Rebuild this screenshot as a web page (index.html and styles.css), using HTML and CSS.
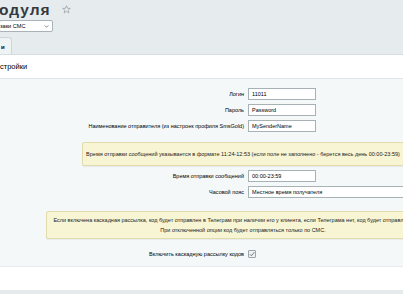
FILE: index.html
```html
<!DOCTYPE html>
<html lang="ru">
<head>
<meta charset="utf-8">
<title>Настройки модуля</title>
<link rel="stylesheet" href="styles.css">
</head>
<body>
<div class="page">
  <div class="header">
    <div class="title-row">
      <h1 class="title">одуля</h1>
      <svg class="star" viewBox="0 0 10 10" width="9" height="9"><path d="M5 0.8 L6.2 3.6 L9.2 3.8 L6.9 5.8 L7.6 8.8 L5 7.2 L2.4 8.8 L3.1 5.8 L0.8 3.8 L3.8 3.6 Z" fill="none" stroke="#9aa3a7" stroke-width="0.9" stroke-linejoin="round"/></svg>
    </div>
    <div class="sel-row">
      <div class="select">
        <span>заки СМС</span>
        <svg class="arrow" viewBox="0 0 6 4" width="5" height="3"><path d="M0.6 0.6 L3 3 L5.4 0.6" fill="none" stroke="#555" stroke-width="0.9"/></svg>
      </div>
    </div>
    <div class="tabs">
      <div class="tab">и</div>
    </div>
  </div>
  <div class="panel">
    <div class="heading">стройки</div>
    <div class="form">
      <div class="row">
        <label class="label">Логин</label>
        <div class="field"><div class="input">11011</div></div>
      </div>
      <div class="row">
        <label class="label">Пароль</label>
        <div class="field"><div class="input">Password</div></div>
      </div>
      <div class="row">
        <label class="label">Наименование отправителя (из настроек профиля SmsGold)</label>
        <div class="field"><div class="input">MySenderName</div></div>
      </div>
      <div class="note note-time">Время отправки сообщений указывается в формате 11:24-12:53 (если поле не заполнено - берется весь день 00:00-23:59)</div>
      <div class="row">
        <label class="label">Время отправки сообщений</label>
        <div class="field"><div class="input">00:00-23:59</div></div>
      </div>
      <div class="row">
        <label class="label">Часовой пояс</label>
        <div class="field"><div class="input wide">Местное время получателя</div></div>
      </div>
      <div class="note note-cascade">Если включена каскадная рассылка, код будет отправлен в Телеграм при наличии его у клиента, если Телеграма нет, код будет отправлен по СМС.<br>При отключенной опции код будет отправляться только по СМС.</div>
      <div class="row row-check">
        <label class="label">Включить каскадную рассылку кодов</label>
        <div class="field"><span class="checkbox"><svg viewBox="0 0 8 8" width="8" height="8"><path d="M1.8 4.2 L3.4 5.8 L6.4 2.2" fill="none" stroke="#6a7478" stroke-width="0.9"/></svg></span></div>
      </div>
    </div>
    <div class="footer"></div>
  </div>
  <div class="bottom"></div>
</div>
</body>
</html>
```
FILE: styles.css
```css
html, body {
  margin: 0;
  padding: 0;
  overflow: hidden;
  background: #e6ecee;
}
body {
  font-family: "Liberation Sans", Arial, sans-serif;
  color: #000;
}
.page {
  width: 486px;
}
.header {
  background: #e6ecee;
  padding-top: 3px;
}
.title-row {
  display: flex;
  align-items: center;
  height: 14px;
}
.title {
  margin: 0;
  font-size: 15.5px;
  font-weight: bold;
  color: #33393c;
  line-height: 14px;
  letter-spacing: 1px;
  margin-left: -1px;
}
.star {
  margin-left: 11px;
  margin-top: -1px;
}
.sel-row {
  margin-top: 3px;
  height: 12px;
}
.select {
  width: 49px;
  height: 10px;
  margin-left: -1px;
  border: 1px solid #a9b3b7;
  border-radius: 2px;
  background: #fff;
  display: flex;
  align-items: center;
  justify-content: space-between;
  font-size: 5.6px;
  padding: 0 3px 0 0;
  box-sizing: content-box;
}
.tabs {
  margin-top: 5px;
  display: flex;
}
.tab {
  width: 12px;
  height: 17px;
  background: #eef3f4;
  border: 1px solid #cdd6d9;
  border-left: none;
  border-bottom: none;
  border-radius: 0 3px 0 0;
  font-size: 6px;
  font-weight: bold;
  line-height: 18px;
  padding-left: 1px;
  box-sizing: border-box;
}
.panel {
  background: #fff;
  border-top: 1px solid #d6dee0;
}
.heading {
  font-size: 7.5px;
  line-height: 10px;
  padding: 7px 0 6px 0;
  border-bottom: 1px solid #dfe6e8;
  color: #000;
}
.form {
  background: #f5f8f9;
  padding: 9px 0 6px 0;
  display: flex;
  flex-direction: column;
  border-bottom: 1px solid #e6ebec;
}
.row {
  display: grid;
  grid-template-columns: 244px 1fr;
  column-gap: 4px;
  align-items: center;
  height: 12px;
  margin-bottom: 4px;
}
.label {
  text-align: right;
  font-size: 5.5px;
  color: #000;
  white-space: nowrap;
}
.input {
  width: 68px;
  height: 12px;
  box-sizing: border-box;
  border: 1px solid #a7b2b6;
  background: #fff;
  font-size: 5.5px;
  line-height: 10px;
  padding-left: 3px;
  white-space: nowrap;
  overflow: hidden;
}
.input.wide {
  width: 170px;
}
.note {
  background: #f8f5d4;
  border: 1px solid #e2dbab;
  border-radius: 2px;
  box-shadow: 0 1px 1px rgba(0,0,0,0.06);
  font-size: 5.5px;
  color: #222;
  text-align: center;
  white-space: nowrap;
}
.note-time {
  margin: 6px 0 4px 82px;
  width: 322px;
  height: 24px;
  line-height: 22px;
  box-sizing: border-box;
}
.note-cascade {
  margin: 9px 0 9px 46px;
  width: 394px;
  height: 28px;
  box-sizing: border-box;
  line-height: 10px;
  padding-top: 3px;
}
.row-check {
  margin-bottom: 0;
}
.checkbox {
  display: block;
  width: 8px;
  height: 8px;
  box-sizing: border-box;
  border: 1px solid #9aa5aa;
  background: #eef2f3;
  border-radius: 1px;
  position: relative;
}
.checkbox svg {
  position: absolute;
  left: -1px;
  top: -1px;
}
.footer {
  height: 23px;
  background: #fff;
}
.bottom {
  height: 10px;
  background: #e6ecee;
}
```
